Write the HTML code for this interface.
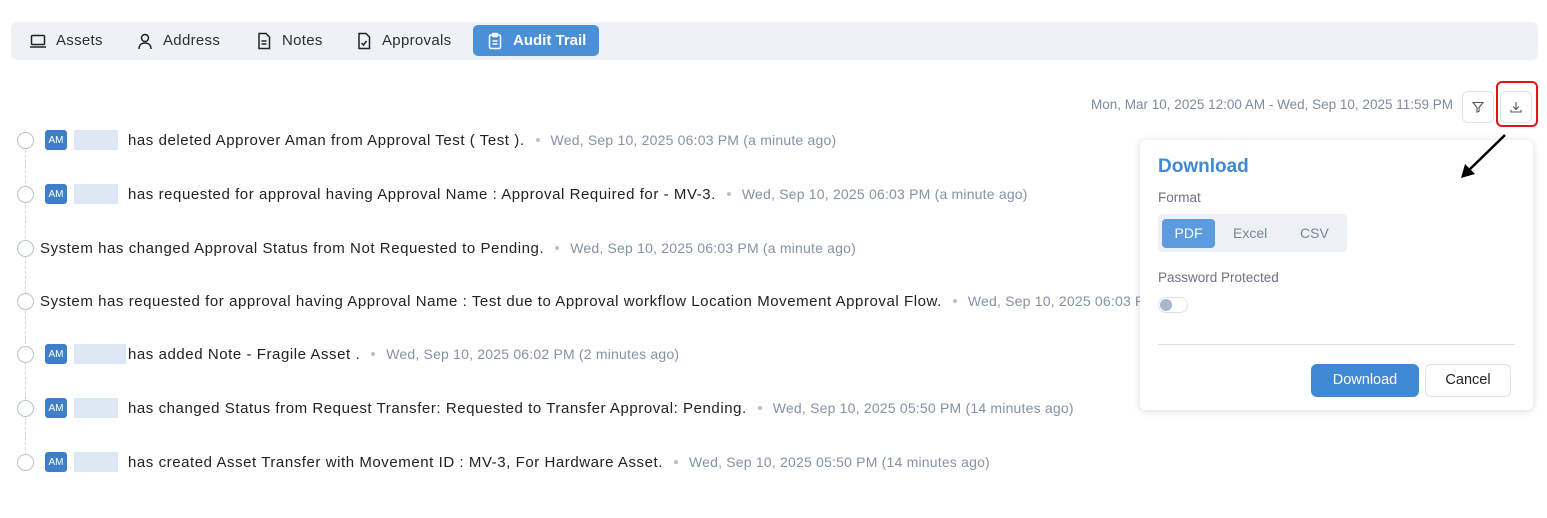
<!DOCTYPE html>
<html><head><style>
body{margin:0;width:1547px;height:518px;background:#fff;font-family:"Liberation Sans",sans-serif;position:relative;overflow:hidden;color:#222}
.tabs{position:absolute;left:11px;top:22px;width:1527px;height:38px;background:#eef1f6;border-radius:6px}
.tab{position:absolute;top:3px;height:31px;line-height:31px;font-size:15px;letter-spacing:0.3px;color:#2b2f36;display:flex;align-items:center;gap:9px}
.tab svg{width:18px;height:18px}
.active{background:#4a90d9;color:#fff;border-radius:5px;padding:0 13px;font-weight:bold;letter-spacing:0}
.row{position:absolute;left:17px;height:22px;display:flex;align-items:center;font-size:15px;letter-spacing:0.56px;white-space:nowrap}
.circ{width:17px;height:17px;border:1.3px solid #b8c2d0;border-radius:50%;box-sizing:border-box;margin-right:11px;background:#fff}
.av{width:22px;height:20px;background:#3f7fc9;color:#fff;font-size:10px;letter-spacing:0;border-radius:3px;display:flex;align-items:center;justify-content:center;margin-right:7px}
.nm{width:44px;height:20px;background:#dde8f4;margin-right:10px}
.ts{color:#8592a6;font-size:14px;letter-spacing:0.2px}
.dot{display:inline-block;width:4px;height:4px;background:#b7c0cc;border-radius:50%;margin:0 11px 0 11px;vertical-align:middle}
.line{position:absolute;left:25px;top:150px;height:310px;border-left:1px dashed #ccd3dc}
.btn{position:absolute;width:32px;height:32px;border:1px solid #dde2e8;border-radius:6px;box-sizing:border-box;display:flex;align-items:center;justify-content:center;background:#fff}
.pop{position:absolute;left:1140px;top:140px;width:393px;height:270px;background:#fff;border-radius:6px;box-shadow:0 1px 8px rgba(0,0,0,.15)}
</style></head><body>
<div class="tabs">
 <div class="tab" style="left:18px"><svg viewBox="0 0 18 18" fill="none" stroke="#222" stroke-width="1.5"><rect x="2.5" y="3.5" width="13" height="9" rx="1"/><path d="M1 15h16"/></svg>Assets</div>
 <div class="tab" style="left:125px"><svg viewBox="0 0 18 18" fill="none" stroke="#222" stroke-width="1.5"><circle cx="9" cy="6" r="3.5"/><path d="M3 17c0-4 2.5-6 6-6s6 2 6 6"/></svg>Address</div>
 <div class="tab" style="left:244px"><svg viewBox="0 0 18 18" fill="none" stroke="#222" stroke-width="1.5"><path d="M4 1.5h7l3.5 3.5v11.5h-10.5z"/><path d="M6.5 9h5M6.5 12h5"/></svg>Notes</div>
 <div class="tab" style="left:344px"><svg viewBox="0 0 18 18" fill="none" stroke="#222" stroke-width="1.5"><path d="M4 1.5h7l3.5 3.5v11.5h-10.5z"/><path d="M6.5 11l2 2 3-4"/></svg>Approvals</div>
 <div class="tab active" style="left:462px"><svg viewBox="0 0 18 18" fill="none" stroke="#fff" stroke-width="1.5"><rect x="3.5" y="3" width="11" height="13.5" rx="1.5"/><rect x="6.5" y="1.5" width="5" height="3" rx="1"/><path d="M6.5 9h5M6.5 12h5"/></svg>Audit Trail</div>
</div>
<div style="position:absolute;right:94px;top:97px;font-size:13.5px;color:#7f8aa0">Mon, Mar 10, 2025 12:00 AM - Wed, Sep 10, 2025 11:59 PM</div>
<div class="btn" style="left:1462px;top:91px"><svg width="12" height="12" viewBox="0 0 12 12" fill="none" stroke="#555" stroke-width="1.1"><path d="M1 1.5h10L7 6.5v4L5 11V6.5z"/></svg></div>
<div class="btn" style="left:1500px;top:91px"><svg width="12" height="12" viewBox="0 0 12 12" fill="none" stroke="#555" stroke-width="1.1"><path d="M6 1v7M3 5.5l3 3 3-3M1 9v2h10V9"/></svg></div>
<div style="position:absolute;left:1496px;top:81px;width:42px;height:46px;border:2.5px solid #e0151b;border-radius:6px;box-sizing:border-box"></div>
<div class="line"></div>
<div class="row" style="top:129px"><div class="circ"></div><div class="av">AM</div><div class="nm"></div>has deleted Approver Aman from Approval Test ( Test ).<span class="dot"></span><span class="ts">Wed, Sep 10, 2025 06:03 PM (a minute ago)</span></div>
<div class="row" style="top:183px"><div class="circ"></div><div class="av">AM</div><div class="nm"></div>has requested for approval having Approval Name : Approval Required for - MV-3.<span class="dot"></span><span class="ts">Wed, Sep 10, 2025 06:03 PM (a minute ago)</span></div>
<div class="row" style="top:237px"><div class="circ" style="margin-right:6px"></div>System has changed Approval Status from Not Requested to Pending.<span class="dot"></span><span class="ts">Wed, Sep 10, 2025 06:03 PM (a minute ago)</span></div>
<div class="row" style="top:290px"><div class="circ" style="margin-right:6px"></div>System has requested for approval having Approval Name : Test due to Approval workflow Location Movement Approval Flow.<span class="dot"></span><span class="ts">Wed, Sep 10, 2025 06:03 PM</span></div>
<div class="row" style="top:343px"><div class="circ"></div><div class="av">AM</div><div class="nm" style="width:52px;margin-right:2px"></div>has added Note - Fragile Asset .<span class="dot"></span><span class="ts">Wed, Sep 10, 2025 06:02 PM (2 minutes ago)</span></div>
<div class="row" style="top:397px"><div class="circ"></div><div class="av">AM</div><div class="nm"></div>has changed Status from Request Transfer: Requested to Transfer Approval: Pending.<span class="dot"></span><span class="ts">Wed, Sep 10, 2025 05:50 PM (14 minutes ago)</span></div>
<div class="row" style="top:451px"><div class="circ"></div><div class="av">AM</div><div class="nm"></div>has created Asset Transfer with Movement ID : MV-3, For Hardware Asset.<span class="dot"></span><span class="ts">Wed, Sep 10, 2025 05:50 PM (14 minutes ago)</span></div>
<div class="pop">
 <div style="position:absolute;left:18px;top:16px;font-size:19px;color:#3f89d4;font-weight:bold">Download</div>
 <div style="position:absolute;left:18px;top:50px;font-size:13.5px;color:#6b7385">Format</div>
 <div style="position:absolute;left:18px;top:74px;width:189px;height:38px;background:#edf1f6;border-radius:4px">
  <div style="position:absolute;left:4px;top:5px;width:53px;height:29px;background:#5b9be0;border-radius:4px;color:#fff;font-size:14px;line-height:29px;text-align:center">PDF</div>
  <div style="position:absolute;left:75px;top:5px;line-height:29px;font-size:14px;color:#7b8496">Excel</div>
  <div style="position:absolute;left:142px;top:5px;line-height:29px;font-size:14px;color:#7b8496">CSV</div>
 </div>
 <div style="position:absolute;left:18px;top:130px;font-size:13.5px;color:#6b7385">Password Protected</div>
 <div style="position:absolute;left:18px;top:157px;width:30px;height:16px;border:1px solid #dde2e8;border-radius:9px;box-sizing:border-box"><div style="position:absolute;left:1px;top:1px;width:12px;height:12px;background:#a9b7cc;border-radius:50%"></div></div>
 <div style="position:absolute;left:18px;top:204px;width:357px;border-top:1px solid #dde2e8"></div>
 <div style="position:absolute;left:171px;top:224px;width:108px;height:33px;background:#3f89d4;border-radius:6px;color:#fff;font-size:14.5px;line-height:33px;text-align:center">Download</div>
 <div style="position:absolute;left:285px;top:224px;width:86px;height:33px;border:1px solid #dde2e8;box-sizing:border-box;border-radius:6px;font-size:14.5px;line-height:31px;text-align:center">Cancel</div>
</div>
<svg style="position:absolute;left:1455px;top:132px;z-index:5" width="55" height="50"><path d="M50 3L12 40" stroke="#000" stroke-width="2.5"/><path d="M6 46L10 32L20 42z" fill="#000"/></svg>
</body></html>
